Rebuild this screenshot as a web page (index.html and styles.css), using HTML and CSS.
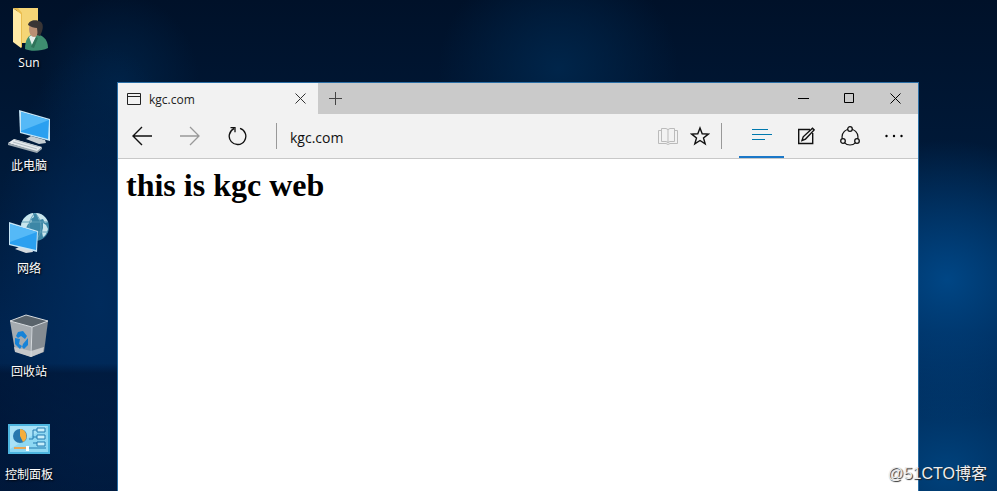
FILE: index.html
```html
<!DOCTYPE html>
<html lang="zh-CN">
<head>
  <meta charset="UTF-8">
  <meta name="viewport" content="width=device-width, initial-scale=1.0">
  <title>kgc.com</title>
  <link rel="stylesheet" href="styles.css">
</head>
<body>
  <div class="desktop">
    <nav class="shortcuts">
      <a class="shortcut" href="#">
        <svg width="48" height="48" viewBox="0 0 48 48">
          <path d="M12 3h21v35H15z" fill="#f5d576"/>
          <path d="M8 3l8 6v34l-8-6z" fill="#ffeaa6"/>
          <path d="M8 3h5l4 5v34l-1 1V9z" fill="#e9bd4f"/>
          <path d="M20 44c0-9 3-14 9-15 8 0 14 5 14 14-6 3-17 4-23 1z" fill="#3e8e70"/>
          <path d="M24 32l4-3 3 3-4 8z" fill="#e4f0ec"/>
          <path d="M26 42l5-10 2 1-4 10z" fill="#2f735a"/>
          <ellipse cx="29" cy="24" rx="5" ry="8" fill="#b98f74"/>
          <path d="M23 20c1-5 8-6 13-3 3 3 2 8-1 14l-3-1c1-3 0-5 0-7-3 0-6-1-9-3z" fill="#393535"/>
        </svg>
        <span>Sun</span>
      </a>
      <a class="shortcut" href="#">
        <svg width="48" height="48" viewBox="0 0 48 48">
          <path d="M21 31l5-3 14 4 1 3-7 1z" fill="#c5cdd2"/>
          <path d="M3 35l6-4 28 8-5 5z" fill="#e6eaed"/>
          <path d="M3 35l29 8 5-4v2l-5 4-29-8z" fill="#9ba8b0"/>
          <path d="M8 34l24 7M10 32l24 7" stroke="#b4bfc6" fill="none"/>
          <path d="M14 2l31 9v22l-30-8z" fill="#c6e5f6"/>
          <path d="M16 4l28 8-1 19-27-7z" fill="#2ba0f0"/>
          <path d="M16 4l28 8-28 11z" fill="#55b9f7"/>
        </svg>
        <span>此电脑</span>
      </a>
      <a class="shortcut" href="#">
        <svg width="48" height="48" viewBox="0 0 48 48">
          <circle cx="30" cy="16" r="14" fill="#3d87a6"/>
          <path d="M16 14c1-6 6-11 12-12l1 4-3 2 1 3-4 2-2 4-4 1zM31 2c6 0 10 4 12 9l-3 1-2-4-4 1zM38 12l3 2 2 4c-1 4-3 7-5 8l-1-5 1-4z" fill="#c9e5ec"/>
          <path d="M30 2c-8 8-8 20 0 28M30 2c8 8 8 20 0 28M17 11h26M17 21h26" stroke="#5f9fb8" fill="none"/>
          <path d="M10 38l6-3 11 3 1 3-7 1z" fill="#d5dbdf"/>
          <path d="M4 11l29 9-1 21-28-7z" fill="#c6e5f6"/>
          <path d="M5 13l27 8-1 18-26-6z" fill="#2ba0f0"/>
          <path d="M5 13l27 8-27 10z" fill="#55b9f7"/>
        </svg>
        <span>网络</span>
      </a>
      <a class="shortcut" href="#">
        <svg width="48" height="48" viewBox="0 0 48 48">
          <path d="M5 7l16-6 22 6-16 6z" fill="#59636b"/>
          <path d="M5 7l22 6-1 30-16-6z" fill="#a5abb0"/>
          <path d="M27 13l16-6-4 31-13 5z" fill="#858c92"/>
          <path d="M9 33l17 4 13-4-1 5-12 5-16-5z" fill="#c6c8ca"/>
          <path d="M5 7l16-6 22 6-16 6zM27 13l-1 30" stroke="#d7dbde" fill="none"/>
          <path d="M13 18l5-1 4 5-2 3-4-3-3 2-2-2zM10 24l5 1-1 5 3 2-2 3-5-5zM18 30l5-6v7l-4 4-2-2z" fill="#1683d8"/>
        </svg>
        <span>回收站</span>
      </a>
      <a class="shortcut" href="#">
        <svg width="48" height="48" viewBox="0 0 48 48">
          <path d="M3 7h42v30H3z" fill="#4db5df"/>
          <path d="M5 9h38v26H5z" fill="#8ed8f3"/>
          <path d="M5 9h38L5 32z" fill="#a9e2f7"/>
          <circle cx="15" cy="19" r="7" fill="#2878ae"/>
          <path d="M15 19v-7a7 7 0 0 1 3 13z" fill="#f4ae3d"/>
          <path d="M24 22h4v-9h4M28 20h4M28 26h4M21 31h20" stroke="#237bb0" fill="none"/>
          <path d="M32 11h8v4h-8zM32 18h8v4h-8zM32 25h8v4h-8z" fill="#c8eefa" stroke="#237bb0"/>
          <path d="M9 31h12" stroke="#e7a657" stroke-width="2"/>
          <path d="M21 29h3v5h-3z" fill="#fff"/>
        </svg>
        <span>控制面板</span>
      </a>
    </nav>

    <main class="window">
      <header class="titlebar">
        <div class="tab">
          <svg width="14" height="12" viewBox="0 0 14 12"><path d="M.5.5h13v11H.5zM0 3.500h14" stroke="#222" fill="none"/></svg>
          <span class="tab-title">kgc.com</span>
          <button class="tab-close" aria-label="Close tab">
            <svg width="11" height="11" viewBox="0 0 11 11"><path d="M.5.5l10 10M10.500.5l-10 10" stroke="#333" fill="none"/></svg>
          </button>
        </div>
        <button class="new-tab" aria-label="New tab">
          <svg width="13" height="13" viewBox="0 0 13 13"><path d="M6.500 0v13M0 6.500h13" stroke="#444" fill="none"/></svg>
        </button>
        <div class="window-buttons">
          <button aria-label="Minimize"><svg width="11" height="11" viewBox="0 0 11 11"><path d="M0 5.500h11" stroke="#000"/></svg></button>
          <button aria-label="Maximize"><svg width="11" height="11" viewBox="0 0 11 11"><path d="M.5.5h9v9h-9z" stroke="#000" fill="none"/></svg></button>
          <button aria-label="Close"><svg width="11" height="11" viewBox="0 0 11 11"><path d="M.5.5l10 10M10.500.5l-10 10" stroke="#000" fill="none"/></svg></button>
        </div>
      </header>

      <div class="toolbar">
        <button class="nav-button" aria-label="Back">
          <svg width="20" height="20" viewBox="0 0 20 20"><path d="M20 10H1M10 1l-9 9 9 9" stroke="#111" stroke-width="1.400" fill="none"/></svg>
        </button>
        <button class="nav-button" aria-label="Forward" disabled>
          <svg width="20" height="20" viewBox="0 0 20 20"><path d="M0 10h19M10 1l9 9-9 9" stroke="#999" stroke-width="1.300" fill="none"/></svg>
        </button>
        <button class="nav-button" aria-label="Refresh">
          <svg width="20" height="20" viewBox="0 0 20 20"><path d="M12 2.300A8.300 8.300 0 1 1 6 2.700M2.500 1.700H7v4.500" stroke="#111" stroke-width="1.300" fill="none"/></svg>
        </button>
        <span class="divider"></span>
        <input class="address" type="text" value="kgc.com" aria-label="Address">
        <button class="page-button" aria-label="Reading view" disabled>
          <svg width="20" height="18" viewBox="0 0 20 18"><path d="M10 2v14M3.500 1.500H8l2 1 2-1h4.500v13H12l-2 1-2-1H3.500zM3 3.500H.5v13H8l2 1 2-1h7.500v-13H17" stroke="#bbb" fill="none"/></svg>
        </button>
        <button class="page-button" aria-label="Add to favorites">
          <svg width="20" height="20" viewBox="0 0 20 20"><path d="M10 2l2.200 5.800 6.100.3-4.800 3.800 1.700 6L10 14.500l-5.200 3.400 1.700-6-4.800-3.800 6.100-.3z" stroke="#111" stroke-width="1.400" fill="none"/></svg>
        </button>
        <span class="divider divider-right"></span>
        <button class="tool-button active" aria-label="Hub">
          <svg width="20" height="14" viewBox="0 0 20 14"><path d="M0 1.500h16M0 6.500h20M0 11.500h13" stroke="#0078ae" stroke-width="1.200"/></svg>
        </button>
        <button class="tool-button" aria-label="Make a web note">
          <svg width="18" height="18" viewBox="0 0 18 18"><path d="M13 2.500H1.700v14h14V6M5 13.500l1.200-3.700 9.300-8.600 1.700 1.700-8.700 9.200z" stroke="#111" stroke-width="1.400" fill="none"/></svg>
        </button>
        <button class="tool-button" aria-label="Share">
          <svg width="20" height="20" viewBox="0 0 20 20">
            <circle cx="10" cy="11" r="8" stroke="#111" stroke-width="1.200" fill="none"/>
            <g stroke="#111" stroke-width="1.300" fill="#f2f2f2"><circle cx="10" cy="3" r="2.300"/><circle cx="3" cy="15" r="2.300"/><circle cx="17" cy="15" r="2.300"/></g>
          </svg>
        </button>
        <button class="tool-button" aria-label="More">
          <svg width="18" height="4" viewBox="0 0 18 4"><circle cx="1.500" cy="2" r="1.200"/><circle cx="9" cy="2" r="1.200"/><circle cx="16.500" cy="2" r="1.200"/></svg>
        </button>
      </div>

      <article class="page">
        <h1>this is kgc web</h1>
      </article>
    </main>
    <div class="watermark">@51CTO博客</div>
  </div>
</body>
</html>
```

FILE: styles.css
```css
* {
  box-sizing: border-box;
}
body {
  margin: 0;
  font-family: "Open Sans", "Noto Sans CJK SC", sans-serif;
}
.desktop {
  display: flex;
  position: relative;
  height: 100vh;
  overflow: hidden;
  background:
    linear-gradient(to bottom, transparent 74%, rgba(0, 14, 40, 0.5) 76%, rgba(0, 14, 40, 0.3) 100%) left / 118px 100% no-repeat,
    radial-gradient(ellipse 150px 140px at 95% 57%, #004685, transparent),
    radial-gradient(ellipse 170px 140px at 95% 96%, #00427c, transparent),
    radial-gradient(ellipse 110px 260px at 10% 62%, #002b5c, transparent),
    radial-gradient(ellipse 120px 110px at 56% 14%, #00254a, transparent),
    radial-gradient(ellipse 80px 90px at 12% 17%, #002144, transparent),
    linear-gradient(to bottom, #001129, #001a3a 35%, #002450 70%, #001c42);
}
.shortcuts {
  display: flex;
  flex-direction: column;
  gap: 35px;
  width: 58px;
  padding-top: 5px;
}
.shortcut {
  display: flex;
  flex-direction: column;
  align-items: center;
  flex-shrink: 0;
  color: white;
  font-size: 12px;
  line-height: 20px;
  text-decoration: none;
  white-space: nowrap;
  text-shadow: 1px 1px 2px black;
}

/* browser window */
.window {
  display: flex;
  flex-direction: column;
  flex: 1;
  margin: 82px 78px 0 59px;
  background: white;
  border: 1px solid #2a6ea5;
  border-bottom: none;
}
.window button {
  display: flex;
  align-items: center;
  justify-content: center;
  padding: 0;
  border: none;
  background: none;
}
.titlebar {
  display: flex;
  height: 31px;
  background: #cacaca;
}
.tab {
  display: flex;
  align-items: center;
  width: 200px;
  padding-left: 9px;
  background: #f2f2f2;
}
.tab-title {
  flex: 1;
  padding: 1px 0 0 8px;
  font-size: 12px;
  color: #222;
}
.window .tab-close {
  width: 36px;
  height: 31px;
}
.window .new-tab {
  width: 34px;
}
.window-buttons {
  display: flex;
  margin-left: auto;
}
.window-buttons button {
  width: 46px;
}
.toolbar {
  display: flex;
  align-items: center;
  height: 45px;
  padding-right: 2px;
  background: #f2f2f2;
  border-bottom: 1px solid #c8c8c8;
}
.window .nav-button {
  width: 48px;
  height: 44px;
}
.divider {
  width: 1px;
  height: 26px;
  margin: 0 13px 0 14px;
  background: #999;
}
.divider-right {
  margin: 0 17px 0 5px;
}
.address {
  flex: 1;
  min-width: 0;
  padding: 2px 0 0;
  border: none;
  outline: none;
  background: none;
  color: #111;
  font-family: inherit;
  font-size: 14px;
}
.window .page-button {
  width: 32px;
  height: 44px;
}
.window .tool-button {
  width: 44px;
  height: 44px;
}
.window .active {
  width: 45px;
  border-bottom: 2px solid #1b78c8;
}
.page {
  padding: 8px;
}
.page h1 {
  margin: 0;
  font-family: "Liberation Serif", serif;
  font-size: 32px;
  line-height: 36px;
}
.watermark {
  position: absolute;
  right: 10px;
  bottom: 7px;
  color: #eee;
  font-family: "Liberation Sans", "Noto Sans CJK SC", sans-serif;
  font-size: 16px;
  line-height: 20px;
  text-shadow: 1px 1px 1px #222;
}
```
